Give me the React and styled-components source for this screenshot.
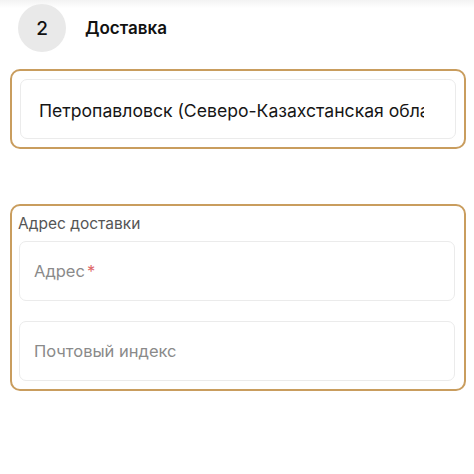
import React from "react";
import styled, { createGlobalStyle } from "styled-components";

const gold = "#c99d5e";

const GlobalStyle = createGlobalStyle`
  html, body {
    margin: 0;
    padding: 0;
    background: #ffffff;
    font-family: "Inter", "Noto Sans", sans-serif;
  }
`;

const Page = styled.div`
  width: 474px;
  height: 474px;
  box-sizing: border-box;
  background: linear-gradient(#f3f3f3 0, #ffffff 8px);
  padding: 4px 8px 0 10px;
`;

const StepHeader = styled.div`
  display: flex;
  align-items: center;
  gap: 19px;
  padding-left: 8px;
  height: 48px;
`;

const StepNumber = styled.div`
  width: 48px;
  height: 48px;
  border-radius: 50%;
  background: #e9e9e9;
  display: flex;
  align-items: center;
  justify-content: center;
  font-size: 19px;
  font-weight: 500;
  color: #111;
`;

const StepTitle = styled.div`
  font-size: 17px;
  font-weight: 600;
  color: #111;
`;

const Frame = styled.div`
  margin-top: ${(p) => p.$top}px;
  border: 2.5px solid ${gold};
  border-radius: 10px;
  padding: ${(p) => p.$pad};
  display: flex;
  flex-direction: column;
  gap: 20px;
`;

const Label = styled.div`
  font-size: 15.5px;
  color: #555;
  margin-bottom: -12px;
  margin-left: -1px;
`;

const Field = styled.div`
  height: 58px;
  border: 1px solid #ebebeb;
  border-radius: 7px;
  background: #fff;
  display: flex;
  align-items: center;
  padding: 0 ${(p) => p.$padRight ?? p.$padX}px 0 ${(p) => p.$padX}px;
  font-size: ${(p) => (p.$filled ? "17.6px" : "16.5px")};
  color: ${(p) => (p.$filled ? "#161616" : "#8a8a8a")};
`;

const Value = styled.span`
  flex: 1;
  overflow: hidden;
  white-space: nowrap;
  padding-top: 2px;
`;

const Star = styled.span`
  color: #e06a6a;
  margin-left: 2px;
`;

export default function App() {
  return (
    <>
      <GlobalStyle />
      <Page>
        <StepHeader>
          <StepNumber>2</StepNumber>
          <StepTitle>Доставка</StepTitle>
        </StepHeader>
        <Frame $top={17} $pad="8px 8px 8px 8px">
          <Field $filled $padX={18} $padRight={31}>
            <Value>Петропавловск (Северо-Казахстанская облас</Value>
          </Field>
        </Frame>
        <Frame $top={55} $pad="8px 9px 8px 7px">
          <Label>Адрес доставки</Label>
          <Field $padX={14}>
            Адрес<Star>*</Star>
          </Field>
          <Field $padX={14}>Почтовый индекс</Field>
        </Frame>
      </Page>
    </>
  );
}
